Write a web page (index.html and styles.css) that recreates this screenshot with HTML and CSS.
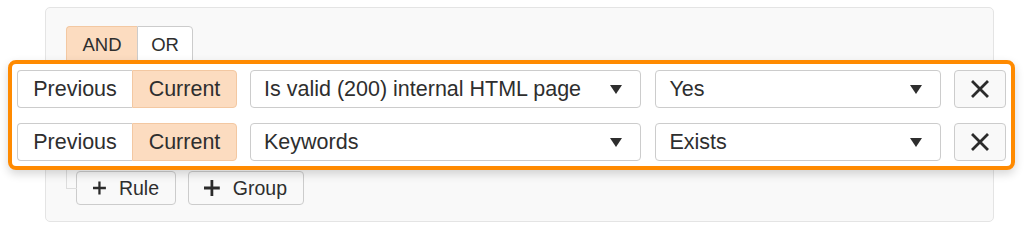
FILE: index.html
```html
<!DOCTYPE html>
<html>
<head>
<meta charset="utf-8">
<link rel="stylesheet" href="styles.css">
</head>
<body>
<div class="group">
  <div class="conditions">
    <span class="seg seg-and active">AND</span><span class="seg seg-or">OR</span>
  </div>
  <div class="highlight">
    <div class="rule">
      <div class="toggle">
        <span class="tg tg-prev">Previous</span><span class="tg tg-cur active">Current</span>
      </div>
      <div class="select select-field"><span>Is valid (200) internal HTML page</span><i class="caret"></i></div>
      <div class="select select-value"><span>Yes</span><i class="caret"></i></div>
      <div class="remove"><svg viewBox="0 0 20 20" width="20" height="20"><path d="M3 3 L17 17 M17 3 L3 17" stroke="#2b2b2b" stroke-width="2.8" stroke-linecap="square" fill="none"/></svg></div>
    </div>
    <div class="rule">
      <div class="toggle">
        <span class="tg tg-prev">Previous</span><span class="tg tg-cur active">Current</span>
      </div>
      <div class="select select-field"><span>Keywords</span><i class="caret"></i></div>
      <div class="select select-value"><span>Exists</span><i class="caret"></i></div>
      <div class="remove"><svg viewBox="0 0 20 20" width="20" height="20"><path d="M3 3 L17 17 M17 3 L3 17" stroke="#2b2b2b" stroke-width="2.8" stroke-linecap="square" fill="none"/></svg></div>
    </div>
  </div>
  <div class="actions">
    <span class="btn btn-rule"><svg viewBox="0 0 16 16" width="16" height="16"><path d="M8 0 V16 M0 8 H16" stroke="#2b2b2b" stroke-width="2.8" fill="none"/></svg><span>Rule</span></span>
    <span class="btn btn-group"><svg viewBox="0 0 16 16" width="16" height="16"><path d="M8 0 V16 M0 8 H16" stroke="#2b2b2b" stroke-width="2.8" fill="none"/></svg><span>Group</span></span>
  </div>
</div>
</body>
</html>
```

FILE: styles.css
```css
html, body {
  margin: 0;
  padding: 0;
  background: #ffffff;
}
body {
  font-family: "Liberation Sans", Arial, Helvetica, sans-serif;
  color: #2e2e2e;
}
.group {
  margin: 7px 0 0 45px;
  width: 949px;
  height: 215px;
  box-sizing: border-box;
  background: #f9f9f9;
  border: 1px solid #e4e4e4;
  border-radius: 5px;
  padding: 18px 20px 16px 20px;
}
.conditions {
  display: flex;
  height: 38px;
  margin-bottom: -4px;
}
.seg {
  display: flex;
  align-items: center;
  justify-content: center;
  box-sizing: border-box;
  height: 38px;
  font-size: 18.5px;
  background: #ffffff;
  border: 1px solid #cccccc;
}
.seg-and {
  width: 71px;
  border-radius: 4px 0 0 4px;
  border-right: none;
}
.seg-or {
  width: 56px;
  border-radius: 0 4px 4px 0;
}
.active {
  background: #fcdcc0;
  border-color: #f3c8a2;
}
.highlight {
  position: relative;
  z-index: 2;
  margin: 0 -42px 0 -58px;
  border: 4px solid #ff8a00;
  border-radius: 8px;
  background: #ffffff;
  padding: 6px 5px 5px 5px;
  box-shadow: 0 4px 10px rgba(0, 0, 0, 0.16);
  display: flex;
  flex-direction: column;
  gap: 15px;
}
.rule {
  display: flex;
  height: 38px;
  gap: 13px;
}
.toggle {
  display: flex;
  width: 220px;
}
.tg {
  display: flex;
  align-items: center;
  justify-content: center;
  box-sizing: border-box;
  height: 38px;
  font-size: 21.5px;
  border: 1px solid #cccccc;
  background: #ffffff;
}
.tg-prev {
  width: 115px;
  border-right: none;
  border-radius: 4px 0 0 4px;
}
.tg-cur {
  width: 105px;
  border-radius: 0 4px 4px 0;
  background: #fcdcc0;
  border-color: #f3c8a2;
}
.select {
  display: flex;
  align-items: center;
  justify-content: space-between;
  box-sizing: border-box;
  height: 38px;
  border: 1px solid #cccccc;
  border-radius: 4px;
  background: #ffffff;
  font-size: 21.5px;
  padding: 0 18px 0 13px;
}
.select-field {
  width: 392px;
}
.select-value {
  width: 286px;
  margin-left: 1px;
}
.caret {
  width: 0;
  height: 0;
  border-left: 6px solid transparent;
  border-right: 6px solid transparent;
  border-top: 9px solid #2e2e2e;
}
.remove {
  display: flex;
  align-items: center;
  justify-content: center;
  box-sizing: border-box;
  width: 52px;
  height: 38px;
  border: 1px solid #cccccc;
  border-radius: 4px;
  background: #f9f9f9;
}
.actions {
  position: relative;
  display: flex;
  gap: 12px;
  padding-left: 10px;
  margin-top: 1px;
}
.actions::before {
  content: "";
  position: absolute;
  left: 0;
  top: -4px;
  width: 10px;
  height: 21px;
  border-left: 1px solid #dddddd;
  border-bottom: 1px solid #dddddd;
}
.btn {
  display: flex;
  align-items: center;
  gap: 13px;
  box-sizing: border-box;
  height: 34px;
  padding: 0 16px;
  border: 1px solid #cccccc;
  border-radius: 4px;
  background: #f9f9f9;
  font-size: 19.5px;
}
.btn-rule {
  width: 100px;
}
.btn-group {
  width: 116px;
  padding-left: 15px;
}
```
